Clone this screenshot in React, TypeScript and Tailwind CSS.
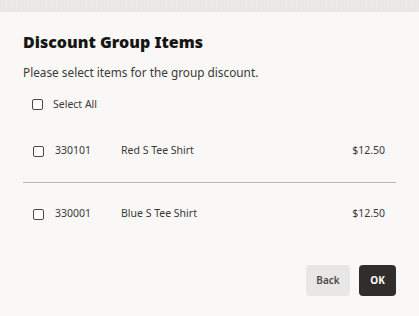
const items = [
  { id: "330101", name: "Red S Tee Shirt", price: "$12.50" },
  { id: "330001", name: "Blue S Tee Shirt", price: "$12.50" },
];

function Box() {
  return <span className="block h-[11px] w-[11px] shrink-0 rounded-[2px] border border-[#4a4846] bg-white" />;
}

export default function App() {
  return (
    <div className="flex h-[316px] w-[419px] flex-col bg-[#f9f8f6] font-['Noto_Sans',sans-serif] text-[#161513]">
      <div className="h-[12px] bg-[repeating-linear-gradient(90deg,#e4e3e1_0px,#eeedeb_2px,#e6e5e3_3px,#ecebe9_5px)]" />
      <div className="flex flex-1 flex-col px-[23px]">
        <h1 className="mt-[19px] text-[16px] leading-[22px] font-black">Discount Group Items</h1>
        <p className="mt-[10px] text-[11.8px] leading-[18px] text-[#3a3936]">
          Please select items for the group discount.
        </p>
        <label className="mt-[16px] flex items-center gap-[10px] pl-[9px] text-[10.5px] leading-[14px] text-[#3a3936]">
          <Box />
          Select All
        </label>
        <div className="mt-[33px]">
          {items.map((it, i) => (
            <div key={it.id} className={i === 0 ? "border-b border-[#b8b6b3] pb-[24px]" : "pt-[24px]"}>
              <div className="flex h-[14px] items-center pl-[10px] text-[10.5px] text-[#3a3936]">
                <Box />
                <span className="ml-[11px] w-[66px]">{it.id}</span>
                <span className="flex-1">{it.name}</span>
                <span className="mr-[11px]">{it.price}</span>
              </div>
            </div>
          ))}
        </div>
        <div className="mt-auto mb-[20px] flex justify-end gap-[9px]">
          <button className="h-[31px] w-[44px] rounded-[4px] bg-[#e8e7e5] text-[10px] font-semibold text-[#4c4a47]">
            Back
          </button>
          <button className="h-[31px] w-[37px] rounded-[4px] bg-[#312d2a] text-[10px] font-bold text-white">
            OK
          </button>
        </div>
      </div>
    </div>
  );
}
